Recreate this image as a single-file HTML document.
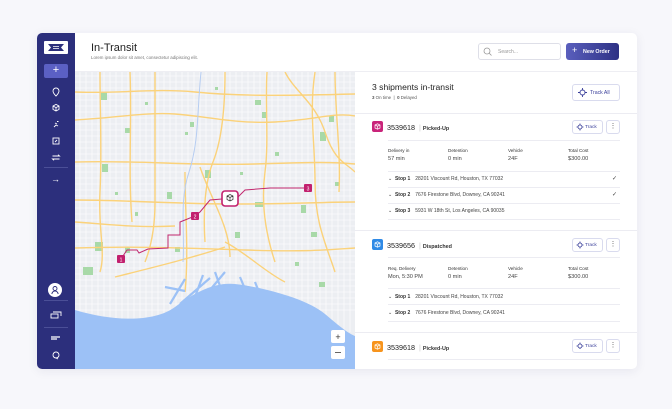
<!DOCTYPE html>
<html><head><meta charset="utf-8"><style>
*{margin:0;padding:0;box-sizing:border-box}
body{width:672px;height:409px;background:#f7f7fb;font-family:"Liberation Sans",sans-serif;position:relative;overflow:hidden;color:#222}
.abs{position:absolute}
.card{left:37px;top:33px;width:600px;height:336px;background:#fff;border-radius:5px;box-shadow:0 2px 10px rgba(40,40,90,.08);overflow:hidden}
.side{left:0;top:0;width:38px;height:336px;background:#2c2f7c}
.t{position:absolute;white-space:nowrap}
.hl{position:absolute;height:1px;background:#ececf2}
.btn{position:absolute;border:1px solid #d9dbee;border-radius:3px;background:#fff}
.lbl{font-size:4.6px;color:#333}
.val{font-size:5.6px;color:#444}
.stop{font-size:5px;color:#444}
.stop b{color:#333;margin-right:5px}
</style></head><body>
<div class="abs card">
 <div class="abs side">
  <div class="abs" style="left:7px;top:8px;width:24px;height:13px;background:#fff;border-radius:1px"></div>
  <svg class="abs" style="left:10px;top:10px" width="18" height="9" viewBox="0 0 18 9"><path d="M1 1h16l-3 3.5 3 3.5H1l3-3.5z" fill="#2c2f7c"/><path d="M6 3.5h6M6 5.5h6" stroke="#fff" stroke-width=".8"/></svg>
  <div class="abs" style="left:7px;top:31px;width:24px;height:14px;background:#5b60c4;border-radius:2px;color:#fff;font-size:11px;text-align:center;line-height:13px">+</div>
  <svg class="abs" style="left:0;top:52px" width="38" height="100" viewBox="0 0 38 100" fill="none" stroke="#fff" stroke-width=".9">
   <path d="M19 11s-3-3-3-5a3 3 0 016 0c0 2-3 5-3 5z"/>
   <path d="M16 21l3-1.6 3 1.6v3.4l-3 1.6-3-1.6zM16 21l3 1.6 3-1.6M19 22.6v3.4"/>
   <path d="M17 42l2-2 2 1M18 38l2 1M20 36.5h1.5"/>
   <rect x="16" y="53" width="6" height="6"/><path d="M18 57l2-2"/>
   <path d="M15.5 71h7l-1.5-1.3M22.5 74h-7l1.5 1.3"/>
  </svg>
  <div class="abs" style="left:7px;top:134px;width:24px;height:1px;background:#4b4f97"></div>
  <div class="t" style="left:14px;top:141px;color:#fff;font-size:9px">→</div>
  <div class="abs" style="left:11px;top:250px;width:14px;height:14px;border-radius:50%;background:#fff"></div>
  <svg class="abs" style="left:11px;top:250px" width="14" height="14" viewBox="0 0 14 14" fill="none" stroke="#2c2f7c" stroke-width=".9"><circle cx="7" cy="5.5" r="2"/><path d="M3.8 11c.5-2 1.7-3 3.2-3s2.7 1 3.2 3"/></svg>
  <div class="abs" style="left:7px;top:267px;width:24px;height:1px;background:#4b4f97"></div>
  <svg class="abs" style="left:0;top:270px" width="38" height="62" viewBox="0 0 38 62" fill="none" stroke="#fff" stroke-width=".9">
   <rect x="14" y="11" width="7" height="4"/><path d="M16 9h8v4"/>
   <path d="M14 34h9M14 36h6" stroke-width="1.2"/>
   <circle cx="19" cy="52" r="3"/><path d="M19 55l2 1"/>
  </svg>
  <div class="abs" style="left:7px;top:294px;width:24px;height:1px;background:#4b4f97"></div>
 </div>
 <!-- header -->
 <div class="t" style="left:54px;top:9px;font-size:11px;color:#222">In-Transit</div>
 <div class="t" style="left:54px;top:22px;font-size:4.4px;color:#777">Lorem ipsum dolor sit amet, consectetur adipiscing elit.</div>
 <div class="abs" style="left:441px;top:10px;width:83px;height:17px;border:1px solid #dedfe8;border-radius:3px"></div>
 <svg class="abs" style="left:446px;top:14px" width="9" height="9" viewBox="0 0 9 9" fill="none" stroke="#999" stroke-width=".8"><circle cx="4" cy="4" r="3"/><path d="M6.2 6.2L8.5 8.5"/></svg>
 <div class="t" style="left:461px;top:15.5px;font-size:5px;color:#999">Search...</div>
 <div class="abs" style="left:529px;top:10px;width:53px;height:17px;border-radius:3px;background:linear-gradient(90deg,#5a5fbd,#2d3184)"></div>
 <div class="t" style="left:535px;top:12px;font-size:9px;color:#fff">+</div>
 <div class="t" style="left:546px;top:15.5px;font-size:5.3px;color:#fff;font-weight:bold">New Order</div>
 <div class="hl" style="left:38px;top:38px;width:562px;background:#eeeef3"></div>
 <!-- map -->
 <svg class="abs" style="left:38px;top:39px" width="280" height="297" viewBox="0 0 280 297">
  <rect width="280" height="297" fill="#eceef2"/>
  <g stroke="#fff" stroke-width=".6">
   <path d="M0 4H280M0 10H280M0 16H280M0 22H280M0 28H280M0 34H280M0 40H280M0 46H280M0 52H280M0 58H280M0 64H280M0 70H280M0 76H280M0 82H280M0 88H280M0 94H280M0 100H280M0 106H280M0 112H280M0 118H280M0 124H280M0 130H280M0 136H280M0 142H280M0 148H280M0 154H280M0 160H280M0 166H280M0 172H280M0 178H280M0 184H280M0 190H280M0 196H280M0 202H280M0 208H280M0 214H280M0 220H280M0 226H280M0 232H280M0 238H280"/>
   <path d="M5 0V260M11 0V260M17 0V260M23 0V260M29 0V260M35 0V260M41 0V260M47 0V260M53 0V260M59 0V260M65 0V260M71 0V260M77 0V260M83 0V260M89 0V260M95 0V260M101 0V260M107 0V260M113 0V260M119 0V260M125 0V260M131 0V260M137 0V260M143 0V260M149 0V260M155 0V260M161 0V260M167 0V260M173 0V260M179 0V260M185 0V260M191 0V260M197 0V260M203 0V260M209 0V260M215 0V260M221 0V260M227 0V260M233 0V260M239 0V260M245 0V260M251 0V260M257 0V260M263 0V260M269 0V260M275 0V260"/>
  </g>
  <g fill="#a8d9a8">
   <rect x="26" y="20" width="6" height="8"/><rect x="50" y="56" width="5" height="5"/><rect x="27" y="92" width="6" height="8"/><rect x="115" y="50" width="4" height="5"/><rect x="180" y="28" width="6" height="5"/><rect x="187" y="40" width="4" height="6"/><rect x="130" y="98" width="6" height="8"/><rect x="92" y="120" width="5" height="7"/><rect x="254" y="44" width="5" height="6"/><rect x="226" y="133" width="5" height="8"/><rect x="236" y="160" width="6" height="5"/><rect x="180" y="130" width="8" height="5"/><rect x="20" y="170" width="8" height="9"/><rect x="50" y="175" width="5" height="6"/><rect x="160" y="160" width="5" height="6"/><rect x="244" y="210" width="6" height="5"/><rect x="100" y="175" width="5" height="5"/><rect x="70" y="30" width="3" height="3"/><rect x="140" y="15" width="3" height="3"/><rect x="200" y="80" width="4" height="4"/><rect x="60" y="140" width="3" height="4"/><rect x="260" y="110" width="4" height="4"/><rect x="245" y="60" width="6" height="9"/><rect x="8" y="195" width="10" height="8"/><rect x="110" y="60" width="3" height="3"/><rect x="165" y="100" width="3" height="3"/><rect x="40" y="120" width="3" height="3"/><rect x="220" y="190" width="4" height="4"/>
  </g>
  <g stroke="#fbd27a" stroke-width="1.4" fill="none">
   <path d="M0 48C40 46 70 40 100 42s60 10 100 8 60-10 80-6"/>
   <path d="M0 90c60-2 120 4 180 2s80-2 100 0"/>
   <path d="M0 128c50 0 100 4 160 4s90-2 120-2"/>
   <path d="M0 176c60-2 110 0 170 2s80 0 110-2"/>
   <path d="M0 150c30 2 60 6 100 4"/>
   <path d="M0 20c40 2 80-4 120 0s80 4 160 2"/>
   <path d="M80 0v130c0 20-2 40-10 60"/>
   <path d="M192 0c-2 30 2 70-2 100s0 60 10 90"/>
   <path d="M150 0c0 40-4 70-12 90s-10 50-8 80"/>
   <path d="M240 0c-6 40 0 70 0 110s10 60 20 90"/>
   <path d="M25 0c0 40 2 80 0 120s6 60 0 80"/>
   <path d="M210 0c10 20 30 30 40 60s20 30 30 40"/>
   <path d="M125 95c10 30 30 60 30 90"/>
   <path d="M55 0c2 50-2 100 2 150"/>
   <path d="M110 100c0 40 4 80 0 120"/>
   <path d="M40 205c40-10 80-20 110-30"/>
   <path d="M150 170c20 10 40 30 60 40"/>
   <path d="M260 0c0 40 6 80 4 120"/>
  </g>
  <path d="M0 238C40 250 80 250 100 235S140 210 160 212S230 225 250 242S275 262 280 264V297H0z" fill="#9cc1f6"/>
  <g stroke="#9cc1f6" stroke-width="2.2" fill="none"><path d="M95 232l15-25M105 232l30-26M120 225l8-22M135 218l15-18M90 215l20 4M140 200l5 14M165 205l5 12M180 210l4 10"/></g>
  <path d="M126 0c-4 40-2 70-12 100s-4 60-6 90" stroke="#b6cdf2" stroke-width="1" fill="none"/>
  <path d="M46 187L52 178H62L64 181 73 177 93 176V163H105V150L110 148 120 144 125 140 135 128 147 127M163 125L170 118 195 116 233 116" stroke="#c2286e" stroke-width="1" fill="none"/>
  <rect x="42" y="183" width="8" height="8" rx="1" fill="#c2206e"/><text x="46" y="189.5" font-size="5" fill="#fff" text-anchor="middle" font-family="Liberation Sans">1</text>
  <rect x="116" y="140" width="8" height="8" rx="1" fill="#c2206e"/><text x="120" y="146.5" font-size="5" fill="#fff" text-anchor="middle" font-family="Liberation Sans">2</text>
  <rect x="229" y="112" width="8" height="8" rx="1" fill="#c2206e"/><text x="233" y="118.5" font-size="5" fill="#fff" text-anchor="middle" font-family="Liberation Sans">3</text>
  <rect x="147" y="119" width="16" height="15" rx="3" fill="#fff" stroke="#c2206e" stroke-width="1.6"/>
  <path d="M152 124l3-1.5 3 1.5v3.5l-3 1.5-3-1.5zM152 124l3 1.5 3-1.5M155 125.5V129" stroke="#333" stroke-width=".7" fill="none"/>
  <rect x="256" y="258" width="14" height="13" rx="2" fill="#fff"/><text x="263" y="268" font-size="9" text-anchor="middle" fill="#333" font-family="Liberation Sans">+</text>
  <rect x="256" y="274" width="14" height="13" rx="2" fill="#fff"/><path d="M260 280.5h6" stroke="#555" stroke-width=".9"/>
 </svg>
 <!-- right panel -->
 <div class="t" style="left:335px;top:49px;font-size:8.6px;color:#222">3 shipments in-transit</div>
 <div class="t" style="left:335px;top:61.5px;font-size:4.4px;color:#555"><b>3</b> On time &nbsp;|&nbsp; <b>0</b> Delayed</div>
 <div class="btn" style="left:535px;top:51px;width:48px;height:17px"></div>
 <svg class="abs" style="left:541px;top:55px" width="9" height="9" viewBox="0 0 9 9" fill="none" stroke="#3a3f9a" stroke-width=".9"><circle cx="4.5" cy="4.5" r="2.5"/><path d="M4.5 0v2M4.5 7v2M0 4.5h2M7 4.5h2"/></svg>
 <div class="t" style="left:553px;top:56.5px;font-size:5.2px;color:#3a3f9a">Track All</div>
 <div class="hl" style="left:318px;top:80px;width:282px"></div>

 <div class="abs" style="left:335px;top:88px;width:11px;height:11px;border-radius:2px;background:#c9247a"></div>
 <div class="t" style="left:350px;top:90px;font-size:7.2px;color:#222">3539618 <span style="color:#ccc">&nbsp;|&nbsp;</span><span style="font-size:5.4px;font-weight:bold;color:#333">Picked-Up</span></div>
 <div class="btn" style="left:535px;top:87px;width:31px;height:14px"></div><div class="t" style="left:548px;top:91.5px;font-size:4.8px;color:#3a3f9a">Track</div>
 <div class="btn" style="left:569px;top:87px;width:14px;height:14px;text-align:center;font-size:7px;line-height:12px;color:#555">⋮</div>
 <div class="hl" style="left:351px;top:107px;width:232px"></div>
 <div class="t lbl" style="left:351px;top:115px">Delivery in</div><div class="t lbl" style="left:411px;top:115px">Detention</div><div class="t lbl" style="left:471px;top:115px">Vehicle</div><div class="t lbl" style="left:531px;top:115px">Total Cost</div>
 <div class="t val" style="left:351px;top:123px">57 min</div><div class="t val" style="left:411px;top:123px">0 min</div><div class="t val" style="left:471px;top:123px">24F</div><div class="t val" style="left:531px;top:123px">$300.00</div>
 <div class="hl" style="left:351px;top:138px;width:232px"></div>
 <div class="t stop" style="left:351px;top:143px">⌄ &nbsp;<b>Stop 1</b>28201 Viscount Rd, Houston, TX 77032</div><div class="t" style="left:575px;top:142px;font-size:6px;color:#444">✓</div>
 <div class="hl" style="left:351px;top:154px;width:232px"></div>
 <div class="t stop" style="left:351px;top:159px">⌄ &nbsp;<b>Stop 2</b>7676 Firestone Blvd, Downey, CA 90241</div><div class="t" style="left:575px;top:158px;font-size:6px;color:#444">✓</div>
 <div class="hl" style="left:351px;top:170px;width:232px"></div>
 <div class="t stop" style="left:351px;top:175px">⌄ &nbsp;<b>Stop 3</b>5931 W 18th St, Los Angeles, CA 90035</div>
 <div class="hl" style="left:351px;top:186px;width:232px"></div>
 <div class="hl" style="left:318px;top:197px;width:282px"></div>

 <div class="abs" style="left:335px;top:206px;width:11px;height:11px;border-radius:2px;background:#2f8ae6"></div>
 <div class="t" style="left:350px;top:208px;font-size:7.2px;color:#222">3539656 <span style="color:#ccc">&nbsp;|&nbsp;</span><span style="font-size:5.4px;font-weight:bold;color:#333">Dispatched</span></div>
 <div class="btn" style="left:535px;top:205px;width:31px;height:14px"></div><div class="t" style="left:548px;top:209.5px;font-size:4.8px;color:#3a3f9a">Track</div>
 <div class="btn" style="left:569px;top:205px;width:14px;height:14px;text-align:center;font-size:7px;line-height:12px;color:#555">⋮</div>
 <div class="hl" style="left:351px;top:224px;width:232px"></div>
 <div class="t lbl" style="left:351px;top:233px">Req. Delivery</div><div class="t lbl" style="left:411px;top:233px">Detention</div><div class="t lbl" style="left:471px;top:233px">Vehicle</div><div class="t lbl" style="left:531px;top:233px">Total Cost</div>
 <div class="t val" style="left:351px;top:241px">Mon, 5:30 PM</div><div class="t val" style="left:411px;top:241px">0 min</div><div class="t val" style="left:471px;top:241px">24F</div><div class="t val" style="left:531px;top:241px">$300.00</div>
 <div class="hl" style="left:351px;top:255px;width:232px"></div>
 <div class="t stop" style="left:351px;top:261px">⌄ &nbsp;<b>Stop 1</b>28201 Viscount Rd, Houston, TX 77032</div>
 <div class="hl" style="left:351px;top:271px;width:232px"></div>
 <div class="t stop" style="left:351px;top:277px">⌄ &nbsp;<b>Stop 2</b>7676 Firestone Blvd, Downey, CA 90241</div>
 <div class="hl" style="left:351px;top:288px;width:232px"></div>
 <div class="hl" style="left:318px;top:299px;width:282px"></div>

 <div class="abs" style="left:335px;top:308px;width:11px;height:11px;border-radius:2px;background:#f7941d"></div>
 <div class="t" style="left:350px;top:310px;font-size:7.2px;color:#222">3539618 <span style="color:#ccc">&nbsp;|&nbsp;</span><span style="font-size:5.4px;font-weight:bold;color:#333">Picked-Up</span></div>
 <div class="btn" style="left:535px;top:306px;width:31px;height:14px"></div><div class="t" style="left:548px;top:310.5px;font-size:4.8px;color:#3a3f9a">Track</div>
 <div class="btn" style="left:569px;top:306px;width:14px;height:14px;text-align:center;font-size:7px;line-height:12px;color:#555">⋮</div>
 <div class="hl" style="left:351px;top:326px;width:232px"></div>
 <svg class="abs" style="left:539px;top:90px" width="8" height="226" viewBox="0 0 8 226" fill="none" stroke="#3a3f9a" stroke-width=".8"><g id="tg"><circle cx="4" cy="4" r="2"/><path d="M4 0.5v1.5M4 6v1.5M0.5 4h1.5M6 4h1.5"/></g><use href="#tg" y="118"/><use href="#tg" y="219"/></svg>
 <svg class="abs" style="left:335px;top:88px" width="11" height="240" viewBox="0 0 11 240" fill="none" stroke="#fff" stroke-width=".7"><path d="M3 4l2.5-1.2L8 4v3L5.5 8.2 3 7zM3 4l2.5 1.2L8 4M5.5 5.2v3"/><path transform="translate(0,118)" d="M3 4l2.5-1.2L8 4v3L5.5 8.2 3 7zM3 4l2.5 1.2L8 4M5.5 5.2v3"/><path transform="translate(0,220)" d="M3 4l2.5-1.2L8 4v3L5.5 8.2 3 7zM3 4l2.5 1.2L8 4M5.5 5.2v3"/></svg>
</div>
</body></html>
